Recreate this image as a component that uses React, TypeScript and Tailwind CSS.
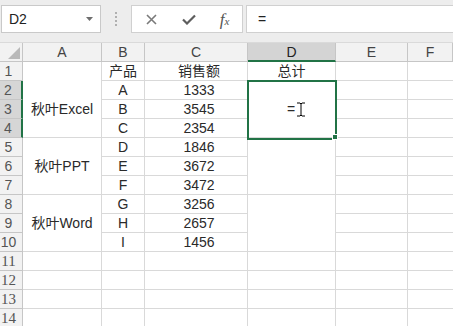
import React from "react";

const G = "border-[#d9d9d9]";
const cellFont = "font-['Liberation_Sans','Noto_Sans_CJK_SC',sans-serif]";

const cCol = ["1333", "3545", "2354", "1846", "3672", "3472", "3256", "2657", "1456"];
const bCol = ["A", "B", "C", "D", "E", "F", "G", "H", "I"];

function IBeam() {
  return (
    <svg width="10" height="15" viewBox="0 0 10 15" className="inline-block">
      <path d="M1 1h3l1 1 1-1h3M5 2v11M1 14h3l1-1 1 1h3" fill="none" stroke="#fff" strokeWidth="2.4" />
      <path d="M1 1h3l1 1 1-1h3M5 2v11M1 14h3l1-1 1 1h3" fill="none" stroke="#000" strokeWidth="1" />
    </svg>
  );
}

export default function App() {
  const rows = Array.from({ length: 14 }, (_, i) => i + 1);
  return (
    <div className="w-[453px] h-[326px] overflow-hidden bg-white select-none">
      {/* Formula bar */}
      <div className="h-[43px] bg-[#ededed] flex items-start pt-[5px] border-b border-[#dadada]">
        <div className="ml-[1px] w-[100px] h-[28px] bg-white border border-[#c9c9c9] flex items-center justify-between pl-[7px] pr-[7px]">
          <span className="text-[14px] text-[#222] font-['Liberation_Sans',sans-serif]">D2</span>
          <svg width="7" height="4" viewBox="0 0 7 4"><path d="M0 0h7L3.5 4z" fill="#6e6e6e" /></svg>
        </div>
        <div className="w-[30px] h-[28px] flex flex-col items-center justify-center gap-[2px]">
          <span className="w-[2px] h-[2px] bg-[#b0b0b0]" />
          <span className="w-[2px] h-[2px] bg-[#b0b0b0]" />
          <span className="w-[2px] h-[2px] bg-[#b0b0b0]" />
          <span className="w-[2px] h-[2px] bg-[#b0b0b0]" />
        </div>
        <div className="w-[112px] h-[28px] bg-white border border-[#d0d0d0] flex items-center">
          <div className="w-[37px] flex justify-center pl-[2px]">
            <svg width="11" height="11" viewBox="0 0 11 11"><path d="M1 1l9 9M10 1l-9 9" stroke="#7a7a7a" strokeWidth="1.6" /></svg>
          </div>
          <div className="w-[37px] flex justify-center pl-[4px]">
            <svg width="14" height="11" viewBox="0 0 14 11"><path d="M1 5.5l4 4L13 1.5" fill="none" stroke="#5e5e5e" strokeWidth="2.2" /></svg>
          </div>
          <div className="w-[37px] flex justify-center pl-[2px]">
            <span className="italic text-[17px] text-[#555] font-['Liberation_Serif',serif] leading-none">
              f<span className="text-[11px]">x</span>
            </span>
          </div>
        </div>
        <div className="w-[3px]" />
        <div className="flex-1 h-[28px] bg-white border border-[#d0d0d0] border-r-0 flex items-center pl-[11px]">
          <span className="text-[14px] text-[#222] font-['Liberation_Sans',sans-serif]">=</span>
        </div>
      </div>

      {/* Grid */}
      <div className={`grid grid-cols-[23px_79px_43px_103px_88px_72px_1fr] auto-rows-[19px] ${cellFont} text-[14px] text-[#2a2a2a] leading-[18px]`}>
        {/* Header row */}
        <div className="bg-[#f2f2f2] border-r border-b border-[#c6c6c6] flex items-end justify-end pr-[2px] pb-[2px]">
          <svg width="12" height="12" viewBox="0 0 12 12"><path d="M12 0V12H0z" fill="#b9b9b9" /></svg>
        </div>
        {["A", "B", "C"].map((c) => (
          <div key={c} className="bg-[#f2f2f2] border-r border-b border-[#c6c6c6] flex items-center justify-center text-[#444]">{c}</div>
        ))}
        <div className="bg-[#d4d4d4] border-r border-[#c6c6c6] border-b-2 border-b-[#217346] flex items-center justify-center text-[#222]">D</div>
        {["E", "F"].map((c) => (
          <div key={c} className="bg-[#f2f2f2] border-r border-b border-[#c6c6c6] flex items-center justify-center text-[#444]">{c}</div>
        ))}

        {/* Row headers */}
        {rows.map((r) => {
          const sel = r >= 2 && r <= 4;
          return (
            <div
              key={"h" + r}
              style={{ gridRow: r + 1, gridColumn: 1 }}
              className={`${sel ? "bg-[#d6d6d6] border-r-2 border-r-[#217346]" : "bg-[#f2f2f2] border-r border-[#c6c6c6]"} border-b border-b-[#c6c6c6] flex items-center justify-center pr-[5px] text-[#555] ${r >= 11 ? "font-['Liberation_Serif',serif] text-[15px]" : ""}`}
            >
              {r}
            </div>
          );
        })}

        {/* Column A */}
        <div style={{ gridRow: 2, gridColumn: 2 }} className={`border-r ${G}`} />
        <div style={{ gridRow: "3 / span 3", gridColumn: 2 }} className={`border-r border-b ${G} flex items-center justify-center`}>秋叶Excel</div>
        <div style={{ gridRow: "6 / span 3", gridColumn: 2 }} className={`border-r border-b ${G} flex items-center justify-center`}>秋叶PPT</div>
        <div style={{ gridRow: "9 / span 3", gridColumn: 2 }} className={`border-r border-b ${G} flex items-center justify-center`}>秋叶Word</div>
        {[12, 13, 14, 15].map((gr) => (
          <div key={"a" + gr} style={{ gridRow: gr, gridColumn: 2 }} className={`border-r border-b ${G}`} />
        ))}

        {/* Column B */}
        {rows.map((r) => (
          <div key={"b" + r} style={{ gridRow: r + 1, gridColumn: 3 }} className={`border-r border-b ${G} flex items-center justify-center`}>
            {r === 1 ? "产品" : bCol[r - 2] ?? ""}
          </div>
        ))}

        {/* Column C */}
        {rows.map((r) => (
          <div key={"c" + r} style={{ gridRow: r + 1, gridColumn: 4 }} className={`border-r border-b ${G} flex items-center justify-center pl-[6px]`}>
            {r === 1 ? "销售额" : cCol[r - 2] ?? ""}
          </div>
        ))}

        {/* Column D */}
        <div style={{ gridRow: 2, gridColumn: 5 }} className={`border-r border-b ${G} flex items-center justify-center`}>总计</div>
        <div style={{ gridRow: "3 / span 3", gridColumn: 5 }} className={`relative border-r border-b ${G} flex items-center justify-center`}>
          <span className="flex items-center gap-[1px] pl-[10px]">
            <span>=</span>
            <IBeam />
          </span>
          <div className="absolute -left-[1px] -top-[1px] w-[90px] h-[60px] border-2 border-[#217346]" />
          <div className="absolute -right-[3px] -bottom-[3px] w-[6px] h-[6px] bg-[#217346] border border-white" />
        </div>
        <div style={{ gridRow: "6 / span 3", gridColumn: 5 }} className={`border-r border-b ${G}`} />
        <div style={{ gridRow: "9 / span 3", gridColumn: 5 }} className={`border-r border-b ${G}`} />
        {[12, 13, 14, 15].map((gr) => (
          <div key={"d" + gr} style={{ gridRow: gr, gridColumn: 5 }} className={`border-r border-b ${G}`} />
        ))}

        {/* Columns E, F */}
        {rows.map((r) => (
          <React.Fragment key={"ef" + r}>
            <div style={{ gridRow: r + 1, gridColumn: 6 }} className={`border-r border-b ${G}`} />
            <div style={{ gridRow: r + 1, gridColumn: 7 }} className={`border-b ${G}`} />
          </React.Fragment>
        ))}
      </div>
    </div>
  );
}
